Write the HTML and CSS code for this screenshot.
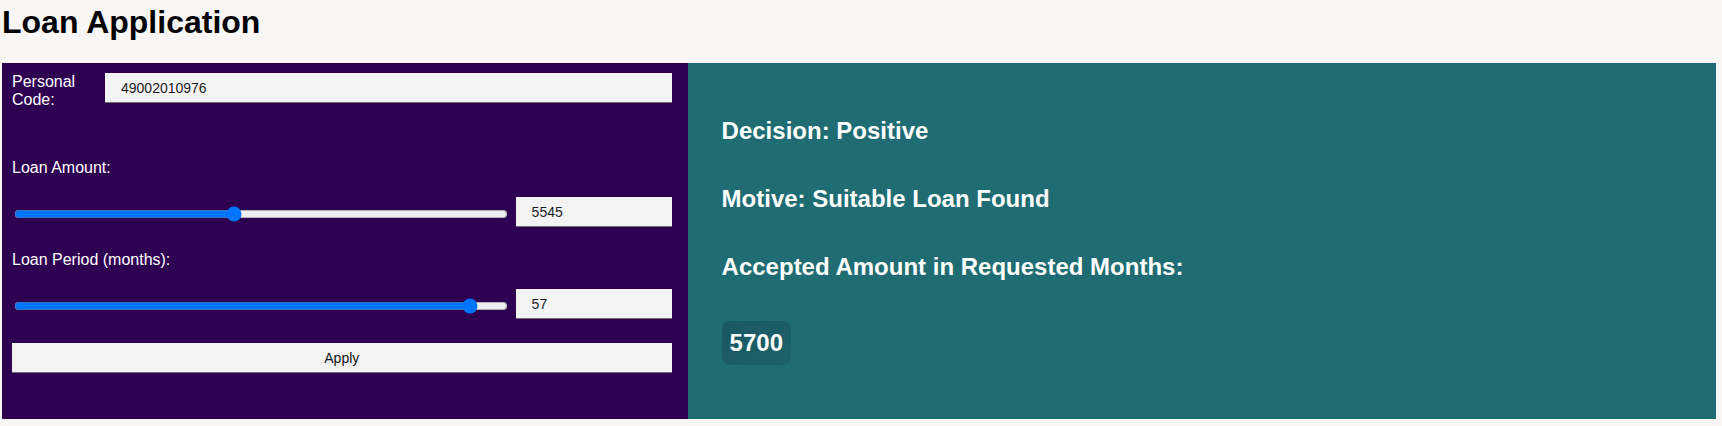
FILE: index.html
```html
<!DOCTYPE html>
<html lang="en">
<head>
<meta charset="utf-8">
<title>Loan Application</title>
<link rel="stylesheet" href="styles.css">
</head>
<body>
<h1 class="title">Loan Application</h1>
<div class="app">
  <form class="form-panel">
    <div class="code-row">
      <label class="code-label" for="code">Personal Code:</label>
      <input class="text-input code-input" id="code" type="text" value="49002010976">
    </div>
    <label class="field-label" for="amount">Loan Amount:</label>
    <div class="slider-row">
      <input class="slider" id="amount" type="range" min="2000" max="10000" step="1" value="5545">
      <input class="text-input num-input" type="text" value="5545">
    </div>
    <label class="field-label" for="period">Loan Period (months):</label>
    <div class="slider-row">
      <input class="slider" id="period" type="range" min="12" max="60" step="1" value="57">
      <input class="text-input num-input" type="text" value="57">
    </div>
    <button class="apply-btn" type="button">Apply</button>
  </form>
  <section class="result-panel">
    <h2 class="result-line">Decision: Positive</h2>
    <h2 class="result-line">Motive: Suitable Loan Found</h2>
    <h2 class="result-line">Accepted Amount in Requested Months:</h2>
    <div class="result-amount"><span class="badge">5700</span></div>
  </section>
</div>
</body>
</html>
```
FILE: styles.css
```css
html, body {
  margin: 0;
}
body {
  background: #f8f7f5;
  font-family: "Liberation Sans", Arial, sans-serif;
  padding: 0 6px 0 2px;
  color: #000;
}
.title {
  font-size: 32px;
  font-weight: bold;
  margin: 4px 0 22px 0;
  line-height: normal;
}
.app {
  display: grid;
  grid-template-columns: 2fr 3fr;
}
.form-panel {
  background: #2e0052;
  padding: 10px 16px 10px 10px;
  display: flex;
  flex-direction: column;
  color: #fff;
  font-size: 16px;
}
.code-row {
  display: flex;
  align-items: flex-start;
  margin-bottom: 50px;
}
.code-label {
  width: 83px;
  margin-right: 10px;
  line-height: normal;
}
.text-input {
  height: 30px;
  box-sizing: border-box;
  border: none;
  border-bottom: 1px solid #707070;
  background: #f3f3f3;
  font-family: "Liberation Sans", Arial, sans-serif;
  font-size: 14px;
  color: #1c1c1c;
  padding: 0 15px 0 16px;
  outline: none;
}
.code-input {
  flex: 1;
  min-width: 0;
}
.field-label {
  line-height: normal;
  margin-bottom: 20px;
}
.slider-row {
  display: flex;
  align-items: center;
  gap: 6px;
  margin-bottom: 24px;
}
.slider {
  flex: 1;
  min-width: 0;
  margin: 4px 2px 0 2px;
}
.num-input {
  width: 156px;
}
.apply-btn {
  height: 30px;
  border: none;
  border-bottom: 1px solid #707070;
  background: #f3f3f3;
  font-family: "Liberation Sans", Arial, sans-serif;
  font-size: 14px;
  color: #111;
  padding: 0;
  margin-bottom: 34px;
}
.result-panel {
  background: #1f6c73;
  color: #fff;
  padding: 54px 34px;
  display: flex;
  flex-direction: column;
  gap: 40px;
}
.result-line {
  margin: 0;
  font-size: 24px;
  font-weight: bold;
  line-height: normal;
}
.result-amount {
  display: flex;
}
.badge {
  font-size: 24px;
  font-weight: bold;
  line-height: normal;
  padding: 8px;
  border-radius: 8px;
  background: linear-gradient(135deg, rgba(16, 50, 66, 0.35), rgba(16, 50, 66, 0.18));
}
```
